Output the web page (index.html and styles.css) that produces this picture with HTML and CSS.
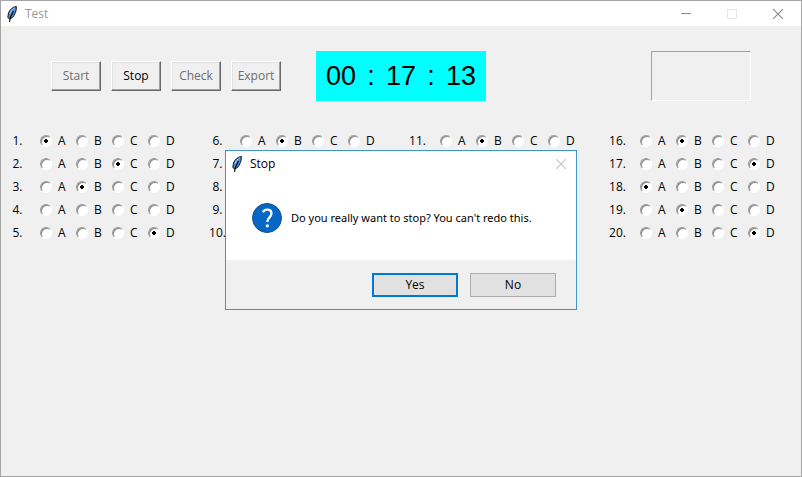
FILE: index.html
```html
<!DOCTYPE html>
<html lang="en">
<head>
<meta charset="utf-8">
<title>Test</title>
<link rel="stylesheet" href="styles.css">
</head>
<body>
<svg class="symbols" aria-hidden="true">
  <symbol id="feather" viewBox="0 0 10 16">
    <path d="M9.300 .5C6 .8 2.800 3.500 1.500 7L.8 11.500 2.500 13 5.500 11.500C7.800 8.500 9.800 5 9.300 .5z" fill="#4a8ed8" stroke="#10151c" stroke-width="1"/>
    <path d="M7.800 1.800C5.500 3 4 5 3 7.800" fill="none" stroke="#a9cdf3" stroke-width="1"/>
    <path d="M6.500 5L3.500 11 2.500 15.800" fill="none" stroke="#000" stroke-width="1.100"/>
  </symbol>
  <symbol id="cross" viewBox="0 0 10 10">
    <path d="M0 0L10 10M10 0L0 10" fill="none" stroke="currentColor" stroke-width="1.100"/>
  </symbol>
</svg>
<div class="window">
  <header class="titlebar">
    <svg class="feather"><use href="#feather"/></svg>
    <h1 class="title">Test</h1>
    <button class="caption" aria-label="Minimize"><svg viewBox="0 0 10 10"><path d="M0 4.500H10" stroke="currentColor"/></svg></button>
    <button class="caption caption-off" aria-label="Maximize" disabled><svg viewBox="0 0 10 10"><path d="M.5 .5H9.500V9.500H.5z" fill="none" stroke="currentColor"/></svg></button>
    <button class="caption" aria-label="Close"><svg><use href="#cross"/></svg></button>
  </header>
  <main>
    <div class="toolbar">
      <div class="actions">
        <button class="tool" disabled>Start</button>
        <button class="tool">Stop</button>
        <button class="tool" disabled>Check</button>
        <button class="tool" disabled>Export</button>
      </div>
      <div class="timer"><span>00</span><span>:</span><span>17</span><span>:</span><span>13</span></div>
      <div class="score"></div>
    </div>
    <form class="questions" id="questions"></form>
  </main>
  <section class="dialog" role="dialog" aria-labelledby="dialog-title">
    <header class="titlebar">
      <svg class="feather"><use href="#feather"/></svg>
      <h2 class="title" id="dialog-title">Stop</h2>
      <button class="caption dialog-close" aria-label="Close" disabled><svg><use href="#cross"/></svg></button>
    </header>
    <div class="message">
      <svg class="question-icon" viewBox="0 0 30 30" aria-hidden="true">
        <circle cx="15" cy="15" r="14.500" fill="#0668c4" stroke="#154f87"/>
        <path d="M11 9.200C12 7.300 13.400 6.700 15.200 6.700C17.900 6.700 19.500 8.200 19.500 10.500C19.500 14 15.300 14.500 15.300 19" fill="none" stroke="#fff" stroke-width="2.300"/>
        <circle cx="15.300" cy="22.800" r="1.600" fill="#fff"/>
      </svg>
      <p>Do you really want to stop? You can't redo this.</p>
    </div>
    <footer class="dialog-actions">
      <button class="choice choice-default">Yes</button>
      <button class="choice">No</button>
    </footer>
  </section>
</div>
<script src="questions.js"></script>
</body>
</html>
```
FILE: styles.css
```css
* { box-sizing: border-box; }

body {
  margin: 0;
  background: #f0f0f0;
  color: #000;
  font: 12px/16px "Open Sans", "Noto Sans", sans-serif;
}

button { font: inherit; color: inherit; }

.symbols { position: absolute; width: 0; height: 0; }

.window {
  position: relative;
  min-height: 100vh;
  border: 1px solid #a5a5a5;
}

.titlebar {
  display: flex;
  align-items: center;
  height: 25px;
  padding-left: 6px;
  background: #fff;
}

.feather { width: 10px; height: 16px; }

.title {
  flex: 1;
  margin: 0 0 0 8px;
  font-size: 12px;
  font-weight: 400;
  color: #999;
}

.caption {
  display: flex;
  align-items: center;
  justify-content: center;
  width: 46px;
  height: 24px;
  padding: 0;
  border: 0;
  background: none;
  color: #888;
}

.caption svg { width: 10px; height: 10px; overflow: visible; }

.caption-off { color: #e6e6e6; }

.toolbar {
  display: flex;
  align-items: center;
  justify-content: space-between;
  padding: 25px 50px 0;
}

.actions { display: flex; gap: 10px; }

.tool {
  width: 50px;
  height: 30px;
  padding: 0;
  border: 1px solid;
  border-color: #fff #696969 #696969 #fff;
  background: #f0f0f0;
  box-shadow: inset -1px -1px #a0a0a0, inset 1px 1px #e3e3e3;
}

.tool:disabled { color: #6d6d6d; }

.timer {
  display: grid;
  grid-template-columns: 50px 10px 50px 10px 50px;
  justify-items: center;
  margin-right: 130px;
  background: #0ff;
  font: 27px/50px "Liberation Sans", Arial, sans-serif;
}

.score {
  width: 100px;
  height: 50px;
  border: 1px solid;
  border-color: #a0a0a0 #fff #fff #a0a0a0;
}

.questions {
  display: grid;
  grid-template-rows: repeat(5, 23px);
  grid-auto-flow: column;
  grid-auto-columns: 1fr;
  padding-top: 28px;
}

.question {
  display: flex;
  align-items: center;
  margin: 0;
  padding: 0;
  border: 0;
}

.number { width: 33px; margin-right: 6px; text-align: center; }

.option {
  display: flex;
  align-items: center;
  gap: 6px;
  width: 36px;
}

.covered { visibility: hidden; }

.option input {
  appearance: none;
  flex: none;
  width: 12px;
  height: 12px;
  margin: 0;
  border: 1px solid;
  border-color: #999 #fff #fff #999;
  border-radius: 50%;
  background: #fff;
  box-shadow: inset 1px 1px #8a8a8a;
}

.option input:checked {
  background: radial-gradient(circle, #000 1px, #000 2px, #fff 2px);
}

.dialog {
  position: absolute;
  top: 149px;
  left: 50%;
  width: 352px;
  margin-left: -176px;
  border: 1px solid #3d97cc;
  background: #fff;
}

.dialog .title { color: #000; }

.dialog-close { width: 30px; color: #c4c4c4; }

.message {
  display: flex;
  align-items: center;
  gap: 9px;
  height: 84px;
  padding-left: 26px;
}

.message p {
  margin: 0;
  font: 11px/16px "Noto Sans", "Open Sans", sans-serif;
  white-space: nowrap;
}

.question-icon { width: 30px; height: 30px; }

.dialog-actions {
  display: flex;
  justify-content: flex-end;
  gap: 12px;
  padding: 13px 20px 12px;
  background: #f0f0f0;
}

.choice {
  width: 86px;
  height: 24px;
  padding: 0;
  border: 1px solid #adadad;
  background: #e1e1e1;
}

.choice-default { border: 2px solid #0078d7; }
```
FILE: questions.js
```js
// Selected answer for each question, in order; "-" means none yet.
const answers = "ACB-DB----B----BDABD";
const form = document.getElementById("questions");

// Parts of the form that lie behind the open dialog are not shown.
const optionsCovered = (n) => n >= 7 && n <= 10;
const rowCovered = (n) => n >= 12 && n <= 15;

[...answers].forEach((answer, index) => {
  const number = index + 1;
  const row = document.createElement("fieldset");
  row.className = rowCovered(number) ? "question covered" : "question";
  row.setAttribute("aria-label", "Question " + number);
  const optionClass = optionsCovered(number) ? "option covered" : "option";
  const options = ["A", "B", "C", "D"].map((letter) =>
    `<label class="${optionClass}"><input type="radio" name="q${number}" value="${letter}"${letter === answer ? " checked" : ""}>${letter}</label>`
  );
  row.innerHTML = `<span class="number">${number}.</span>` + options.join("");
  form.append(row);
});
```
